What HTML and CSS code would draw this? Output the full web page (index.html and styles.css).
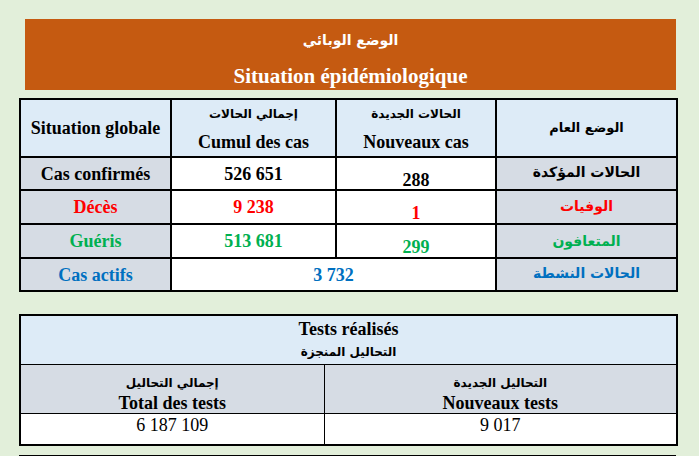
FILE: index.html
```html
<!DOCTYPE html>
<html lang="fr">
<head>
<meta charset="utf-8">
<title>Situation épidémiologique</title>
<link rel="stylesheet" href="styles.css">
</head>
<body>
<div class="page">
  <header class="banner">
    <div class="banner-ar" dir="rtl">الوضع الوبائي</div>
    <div class="banner-fr">Situation épidémiologique</div>
  </header>

  <table class="stats">
    <colgroup>
      <col class="c1"><col class="c2"><col class="c3"><col class="c4">
    </colgroup>
    <tr class="head">
      <th>Situation globale</th>
      <th><span class="ar" dir="rtl">إجمالي الحالات</span><span class="fr">Cumul des cas</span></th>
      <th><span class="ar" dir="rtl">الحالات الجديدة</span><span class="fr">Nouveaux cas</span></th>
      <th class="ar-cell" dir="rtl">الوضع العام</th>
    </tr>
    <tr class="r1">
      <td class="label">Cas confirmés</td>
      <td class="val">526 651</td>
      <td class="val low">288</td>
      <td class="label ar-label up" dir="rtl">الحالات المؤكدة</td>
    </tr>
    <tr class="r2 red">
      <td class="label">Décès</td>
      <td class="val">9 238</td>
      <td class="val low">1</td>
      <td class="label ar-label up" dir="rtl">الوفيات</td>
    </tr>
    <tr class="r3 green">
      <td class="label">Guéris</td>
      <td class="val">513 681</td>
      <td class="val low">299</td>
      <td class="label ar-label" dir="rtl">المتعافون</td>
    </tr>
    <tr class="r4 blue">
      <td class="label">Cas actifs</td>
      <td class="val" colspan="2">3 732</td>
      <td class="label ar-label up" dir="rtl">الحالات النشطة</td>
    </tr>
  </table>

  <table class="tests">
    <colgroup>
      <col class="t1"><col class="t2">
    </colgroup>
    <tr class="title">
      <th colspan="2"><span class="fr">Tests réalisés</span><span class="ar" dir="rtl">التحاليل المنجزة</span></th>
    </tr>
    <tr class="sub">
      <th><span class="ar" dir="rtl">إجمالي التحاليل</span><span class="fr">Total des tests</span></th>
      <th><span class="ar" dir="rtl">التحاليل الجديدة</span><span class="fr">Nouveaux tests</span></th>
    </tr>
    <tr class="data">
      <td>6 187 109</td>
      <td>9 017</td>
    </tr>
  </table>

  <div class="next"></div>
</div>
</body>
</html>
```

FILE: styles.css
```css
html, body {
  margin: 0;
  padding: 0;
}
body {
  background: #e2efda;
  font-family: "Liberation Serif", "DejaVu Sans", serif;
  color: #000;
  width: 699px;
  height: 456px;
  overflow: hidden;
}
.page {
  padding: 19px 23px 0 19px;
  display: flex;
  flex-direction: column;
}
.banner {
  margin-left: 6px;
  height: 71px;
  background: #c55a11;
  color: #fff;
  text-align: center;
  display: flex;
  flex-direction: column;
}
.banner-ar {
  font-family: "DejaVu Sans", sans-serif;
  font-weight: bold;
  font-size: 14px;
  line-height: 20px;
  margin-top: 11px;
}
.banner-fr {
  font-weight: bold;
  font-size: 21px;
  line-height: 26px;
  margin-top: 13px;
}

.stats {
  margin-top: 8px;
  width: 657px;
  border-collapse: collapse;
  table-layout: fixed;
  border: 2px solid #000;
}
.stats .c1 { width: 151px; }
.stats .c2 { width: 165px; }
.stats .c3 { width: 160px; }
.stats .c4 { width: 181px; }
.stats th, .stats td {
  border: 2px solid #000;
  padding: 0;
  text-align: center;
  vertical-align: middle;
  font-weight: bold;
  font-size: 18px;
  line-height: 22px;
}
.stats .head { height: 58px; }
.stats .head th { background: #ddebf7; }
.stats .head .ar {
  display: block;
  font-family: "DejaVu Sans", sans-serif;
  font-size: 12px;
  line-height: 28px;
}
.stats .head .fr {
  display: block;
  line-height: 28px;
}
.stats .head .ar-cell {
  font-family: "DejaVu Sans", sans-serif;
  font-size: 13px;
}
.stats .r1 { height: 33px; }
.stats .r2 { height: 34px; }
.stats .r3 { height: 34px; }
.stats .r4 { height: 33px; }
.stats td.label { background: #d6dce4; }
.stats td.val { background: #fff; }
.stats td.low { padding-top: 12px; line-height: 18px; }
.stats td.ar-label {
  font-family: "DejaVu Sans", sans-serif;
  font-size: 14px;
  line-height: 18px;
}
.stats td.up { padding-bottom: 3px; }
.red td { color: #ff0000; }
.green td { color: #00b050; }
.blue td { color: #0070c0; }

.tests {
  margin-top: 22px;
  width: 657px;
  border-collapse: collapse;
  table-layout: fixed;
  border: 2px solid #000;
}
.tests .t1 { width: 304px; }
.tests .t2 { width: 353px; }
.tests th, .tests td {
  border: 1px solid #000;
  padding: 0;
  text-align: center;
  font-size: 18px;
}
.tests .title { height: 49px; }
.tests .title th { background: #ddebf7; vertical-align: middle; }
.tests .title .fr { display: block; line-height: 24px; }
.tests .title .ar {
  display: block;
  font-family: "DejaVu Sans", sans-serif;
  font-size: 12px;
  line-height: 22px;
}
.tests .sub { height: 48px; }
.tests .sub th {
  background: #d6dce4;
  vertical-align: top;
  padding-top: 7px;
}
.tests .sub .ar {
  display: block;
  font-family: "DejaVu Sans", sans-serif;
  font-size: 12px;
  line-height: 22px;
}
.tests .sub .fr { display: block; line-height: 19px; }
.tests .data { height: 32px; }
.tests .data td {
  background: #fff;
  vertical-align: top;
  padding-top: 1px;
  line-height: 20px;
  font-weight: normal;
}

.next {
  margin-top: 9px;
  height: 20px;
  border: 2px solid #000;
  border-bottom: none;
  background: #fff;
}
```
